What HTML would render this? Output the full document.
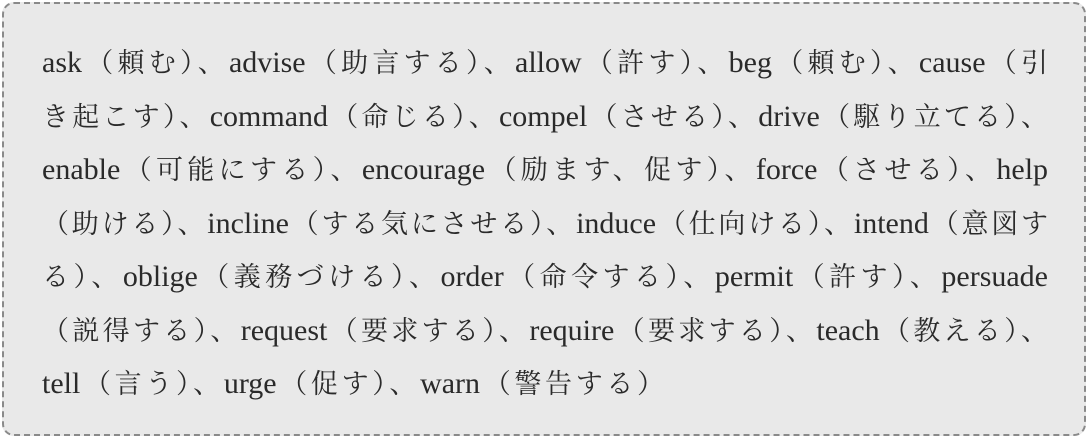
<!DOCTYPE html>
<html><head><meta charset="utf-8"><style>
html,body{margin:0;padding:0;background:#fff;width:1090px;height:440px;overflow:hidden}
.box{position:absolute;left:2px;top:2px;width:1084px;height:434px;box-sizing:border-box;border:2px dashed #8a8a8a;border-radius:12px;background:#e9e9e9}
.t{position:absolute;left:42px;width:1006px;top:40px;font-family:"Liberation Serif","Noto Serif CJK SC","Noto Sans CJK JP",serif;font-size:27px;color:#2a2a2a}
.t .e{font-size:30px}
.l{height:53.5px;line-height:46px;text-align:justify;text-align-last:justify;white-space:nowrap}
.l.last{width:622px}
</style></head><body>
<div class="box"></div>
<div class="t">
<div class="l"><span class="e">ask</span>（頼む）、<span class="e">advise</span>（助言する）、<span class="e">allow</span>（許す）、<span class="e">beg</span>（頼む）、<span class="e">cause</span>（引</div>
<div class="l">き起こす）、<span class="e">command</span>（命じる）、<span class="e">compel</span>（させる）、<span class="e">drive</span>（駆り立てる）、</div>
<div class="l"><span class="e">enable</span>（可能にする）、<span class="e">encourage</span>（励ます、促す）、<span class="e">force</span>（させる）、<span class="e">help</span></div>
<div class="l">（助ける）、<span class="e">incline</span>（する気にさせる）、<span class="e">induce</span>（仕向ける）、<span class="e">intend</span>（意図す</div>
<div class="l">る）、<span class="e">oblige</span>（義務づける）、<span class="e">order</span>（命令する）、<span class="e">permit</span>（許す）、<span class="e">persuade</span></div>
<div class="l">（説得する）、<span class="e">request</span>（要求する）、<span class="e">require</span>（要求する）、<span class="e">teach</span>（教える）、</div>
<div class="l last"><span class="e">tell</span>（言う）、<span class="e">urge</span>（促す）、<span class="e">warn</span>（警告する）</div>
</div>
</body></html>
